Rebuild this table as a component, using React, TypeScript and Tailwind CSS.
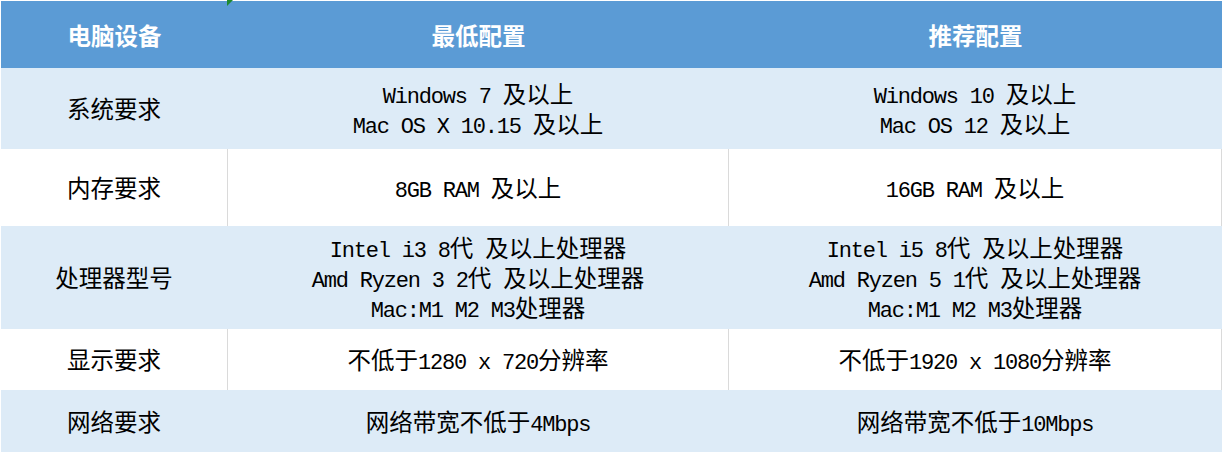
import React from "react";

type Row = {
  label: string;
  min: string[];
  rec: string[];
  height: string;
  shaded: boolean;
};

const rows: Row[] = [
  {
    label: "系统要求",
    min: ["Windows 7 及以上", "Mac OS X 10.15 及以上"],
    rec: ["Windows 10 及以上", "Mac OS 12 及以上"],
    height: "h-[81px]",
    shaded: true,
  },
  {
    label: "内存要求",
    min: ["8GB RAM 及以上"],
    rec: ["16GB RAM 及以上"],
    height: "h-[77px]",
    shaded: false,
  },
  {
    label: "处理器型号",
    min: ["Intel i3 8代 及以上处理器", "Amd Ryzen 3 2代 及以上处理器", "Mac:M1 M2 M3处理器"],
    rec: ["Intel i5 8代 及以上处理器", "Amd Ryzen 5 1代 及以上处理器", "Mac:M1 M2 M3处理器"],
    height: "h-[103px]",
    shaded: true,
  },
  {
    label: "显示要求",
    min: ["不低于1280 x 720分辨率"],
    rec: ["不低于1920 x 1080分辨率"],
    height: "h-[61px]",
    shaded: false,
  },
  {
    label: "网络要求",
    min: ["网络带宽不低于4Mbps"],
    rec: ["网络带宽不低于10Mbps"],
    height: "h-[62px]",
    shaded: true,
  },
];

// CJK runs and half-width latin runs are sized separately
const Line = ({ text }: { text: string }) => (
  <div className="h-[30px] flex items-center">
    <span className="whitespace-pre leading-none">
      {text.split(/([\u4e00-\u9fff]+)/).map((part, i) =>
        /[\u4e00-\u9fff]/.test(part) ? (
          <span key={i} className="text-[23.5px] leading-none font-['Noto_Sans_CJK_SC',sans-serif]">
            {part}
          </span>
        ) : (
          <span key={i} className="text-[22px] leading-none tracking-[-1.2px]">
            {part}
          </span>
        )
      )}
    </span>
  </div>
);

const Cell = ({ lines, shaded }: { lines: string[]; shaded: boolean }) => (
  <div
    className={`flex flex-col items-center justify-center pt-[4px] border-r ${
      shaded ? "border-[#ddebf7]" : "border-[#dadada]"
    }`}
  >
    {lines.map((line) => (
      <Line key={line} text={line} />
    ))}
  </div>
);

export default function App() {
  return (
    <div className="w-[1223px] h-[454px] bg-white pt-px pl-px text-black font-['Liberation_Mono','Noto_Sans_CJK_SC',monospace]">
      <div className="relative w-[1221px]">
        <div className="grid grid-cols-[227px_501px_1fr] h-[67px] pt-[3px] bg-[#5b9bd5] text-white text-[23.5px] font-bold font-['Noto_Sans_CJK_SC',sans-serif]">
          <div className="flex items-center justify-center">电脑设备</div>
          <div className="flex items-center justify-center">最低配置</div>
          <div className="flex items-center justify-center">推荐配置</div>
        </div>
        <svg className="absolute left-[226px] -top-px" width="6" height="6" viewBox="0 0 6 6">
          <polygon points="0,0 6,0 0,6" fill="#1e8a2e" />
        </svg>
        {rows.map((row) => (
          <div
            key={row.label}
            className={`grid grid-cols-[227px_501px_1fr] ${row.height} ${
              row.shaded ? "bg-[#ddebf7]" : "bg-white"
            }`}
          >
            <Cell lines={[row.label]} shaded={row.shaded} />
            <Cell lines={row.min} shaded={row.shaded} />
            <Cell lines={row.rec} shaded={row.shaded} />
          </div>
        ))}
      </div>
    </div>
  );
}
